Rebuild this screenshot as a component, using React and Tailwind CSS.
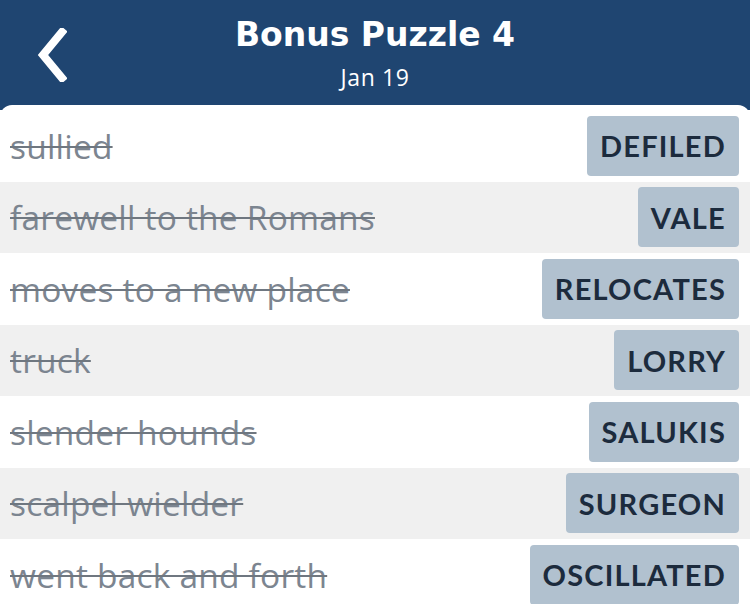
import React from 'react';

const clues = [
  { clue: 'sullied', answer: 'DEFILED' },
  { clue: 'farewell to the Romans', answer: 'VALE' },
  { clue: 'moves to a new place', answer: 'RELOCATES' },
  { clue: 'truck', answer: 'LORRY' },
  { clue: 'slender hounds', answer: 'SALUKIS' },
  { clue: 'scalpel wielder', answer: 'SURGEON' },
  { clue: 'went back and forth', answer: 'OSCILLATED' },
];

const ClueRow = ({ clue, answer, shaded }) => (
  <div
    className={`flex h-[71.5px] shrink-0 items-center justify-between pl-[10px] pr-[11px] ${
      shaded ? 'bg-[#f0f0f0]' : 'bg-white'
    }`}
  >
    <span className="font-['Open_Sans'] text-[33.5px] tracking-[0.2px] text-[#7c8590] line-through decoration-[#6f7780] decoration-2">
      {clue}
    </span>
    <span className="flex h-[60px] items-center rounded-[4px] bg-[#b1c1cf] px-[13px] text-[29px] font-bold tracking-[1.2px] text-[#1c2b3d]">
      {answer}
    </span>
  </div>
);

const App = () => {
  return (
    <div
      className="flex h-[604px] w-[750px] flex-col overflow-hidden bg-[#1f4571]"
      style={{ fontFamily: 'Lato, "Noto Sans", sans-serif' }}
    >
      <header className="relative flex h-[105px] shrink-0 flex-col items-center text-white">
        <button className="absolute left-[31px] top-[24px] p-1">
          <svg width="32" height="54" viewBox="0 0 32 54" fill="none">
            <path d="M27 4 L8 27 L27 50" stroke="white" strokeWidth="8" strokeLinecap="square" />
          </svg>
        </button>
        <h1 className="mt-[13px] font-['DejaVu_Sans'] text-[33px] font-bold leading-[44px]">Bonus Puzzle 4</h1>
        <p className="mt-[7px] font-['Open_Sans'] text-[23px] tracking-[0.6px] leading-[26px]">Jan 19</p>
      </header>
      <div className="flex flex-1 flex-col rounded-t-[12px] bg-white pt-[5px]">
        {clues.map((c, i) => (
          <ClueRow key={c.clue} clue={c.clue} answer={c.answer} shaded={i % 2 === 1} />
        ))}
      </div>
    </div>
  );
};

export default App;
